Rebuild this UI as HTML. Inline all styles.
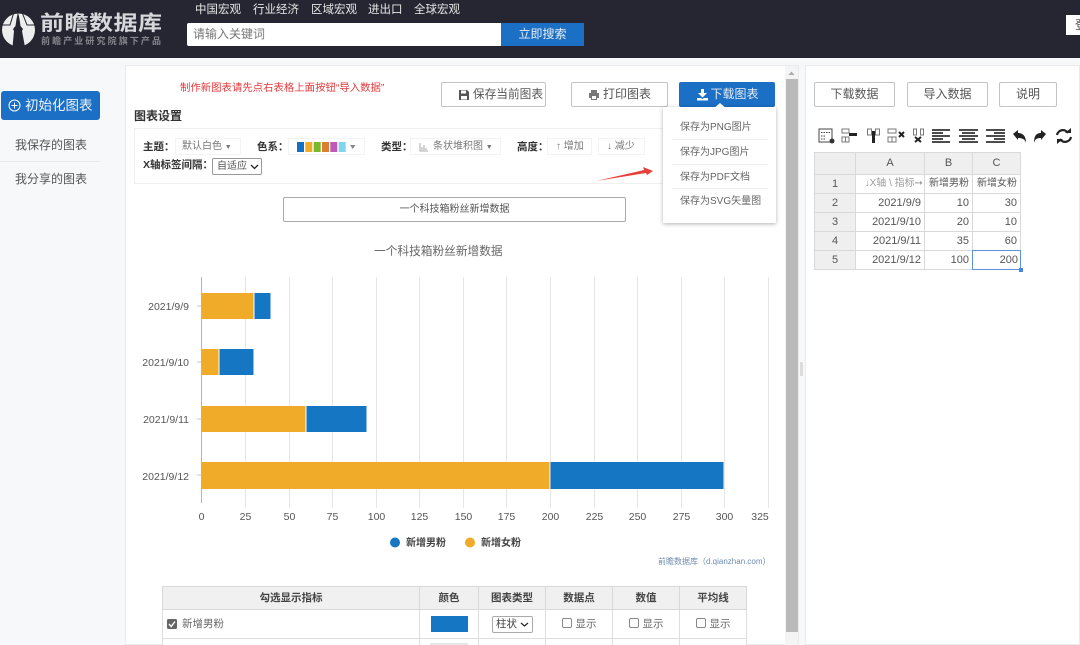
<!DOCTYPE html>
<html lang="zh"><head><meta charset="utf-8"><style>
html,body{margin:0;padding:0;width:1080px;height:645px;overflow:hidden}
body{position:relative;background:#f7f8f9;font-family:"Liberation Sans","Noto Sans CJK SC",sans-serif;color:#555;font-size:11px}
.a{position:absolute;white-space:nowrap}
.btn{position:absolute;box-sizing:border-box;background:#fff;border:1px solid #c4c4c4;border-radius:2px;text-align:center;color:#555;font-size:12px;line-height:23px;height:25px}
.chip{position:absolute;height:17px;line-height:15px;border:1px solid #f3f3f3;box-sizing:border-box;color:#777;font-size:10px;white-space:nowrap}
.b{font-weight:bold;color:#333;font-size:10.5px}
.cell{position:absolute;box-sizing:border-box;border-right:1px solid #d9d9d9;border-bottom:1px solid #d9d9d9;font-size:11px;color:#555;line-height:18px;text-align:right;padding-right:3px;white-space:nowrap;overflow:hidden;background:#fff}
.hd{background:#efefef;text-align:center;padding:0;color:#555}
.th{position:absolute;top:586px;height:24px;line-height:23px;text-align:center;box-sizing:border-box;background:#f0f0f0;border-right:1px solid #d8d8d8;border-bottom:1px solid #d8d8d8;font-weight:bold;color:#444;font-size:10.5px}
.td{position:absolute;top:610px;height:29px;box-sizing:border-box;border-right:1px solid #dedede;border-bottom:1px solid #dedede;background:#fff;font-size:10.5px;color:#666;line-height:29px;text-align:center}
.td2{top:639px;height:6px;border-bottom:none}
.cb{display:inline-block;width:8px;height:8px;border:1px solid #888;border-radius:2px;vertical-align:-1px;margin-right:4px;background:#fff}
.mi{position:absolute;left:680px;color:#666;font-size:10px;white-space:nowrap}
.ln{position:absolute;left:672px;width:96px;height:1px;background:#f0f0f0}
</style></head><body>
<div class="a" style="left:0;top:0;width:1080px;height:58px;background:#252632"></div>
<svg class="a" style="left:0;top:12px" width="36" height="36" viewBox="0 0 36 36"><circle cx="18.500" cy="18" r="16.500" fill="#eee"/><path d="M12.500 35L14 19 13 17 15.500 14 16.500 7 18 0 19.500 7 20.500 14 23 17 22 19 25 35z" fill="#252632"/><path d="M13.500 1.500L10 13H2M22.500 1.500L27 13H35" stroke="#252632" stroke-width="1" fill="none"/></svg>
<div class="a" style="left:40px;top:11px;font-size:24px;line-height:26px;font-weight:bold;color:#d8d8dc;letter-spacing:.5px;transform:scaleY(.85);transform-origin:50% 50%">前瞻数据库</div>
<div class="a" style="left:41px;top:36px;font-size:9px;line-height:11px;font-weight:bold;color:#85868e;letter-spacing:2.100px">前瞻产业研究院旗下产品</div>
<div class="a" style="left:195px;top:2px;font-size:11.500px;line-height:17px;color:#e6e6e6">中国宏观</div>
<div class="a" style="left:253px;top:2px;font-size:11.500px;line-height:17px;color:#e6e6e6">行业经济</div>
<div class="a" style="left:311px;top:2px;font-size:11.500px;line-height:17px;color:#e6e6e6">区域宏观</div>
<div class="a" style="left:368px;top:2px;font-size:11.500px;line-height:17px;color:#e6e6e6">进出口</div>
<div class="a" style="left:414px;top:2px;font-size:11.500px;line-height:17px;color:#e6e6e6">全球宏观</div>
<div class="a" style="left:187px;top:23px;width:314px;height:23px;background:#fff;border-radius:2px 0 0 2px;line-height:23px;text-indent:6px;font-size:12px;color:#777">请输入关键词</div>
<div class="a" style="left:501px;top:23px;width:83px;height:23px;background:#1b6fc4;color:#e8eef6;font-size:12px;line-height:23px;text-align:center">立即搜索</div>
<div class="a" style="left:1066px;top:15px;width:14px;height:20px;background:#fff;color:#555;font-size:12px;line-height:20px;text-indent:9px;overflow:hidden">登</div>

<div class="a" style="left:1px;top:91px;width:99px;height:29px;background:#1b6fc4;border-radius:3px;color:#eef3f9;font-size:13.500px;line-height:29px;text-indent:24px">初始化图表</div>
<svg class="a" style="left:8px;top:99px" width="13" height="13" viewBox="0 0 13 13"><circle cx="6.500" cy="6.500" r="5.500" fill="none" stroke="#fff"/><path d="M6.500 3.500v6M3.500 6.500h6" stroke="#fff"/></svg>
<div class="a" style="left:15px;top:137px;font-size:12px;line-height:17px;color:#555">我保存的图表</div>
<div class="a" style="left:0;top:161px;width:100px;height:1px;background:#eaeaea"></div>
<div class="a" style="left:15px;top:171px;font-size:12px;line-height:17px;color:#555">我分享的图表</div>

<div class="a" style="left:125px;top:65px;width:674px;height:580px;background:#fff;border:1px solid #e9eaec;box-sizing:border-box"></div>
<div class="a" style="left:805px;top:65px;width:275px;height:580px;background:#fff;border:1px solid #e9eaec;box-sizing:border-box"></div>
<div class="a" style="left:785px;top:66px;width:13px;height:579px;background:#f4f4f4"></div>
<div class="a" style="left:786px;top:79px;width:12px;height:553px;background:#b9b9b9"></div>
<svg class="a" style="left:787px;top:70px" width="9" height="6"><path d="M1.500 5L4.500 1.500 7.500 5z" fill="#aaa"/></svg>
<div class="a" style="left:800px;top:362px;width:3px;height:14px;background:#dcdcdc"></div>

<div class="a" style="left:180px;top:82px;font-size:10.400px;line-height:14px;color:#e4393c">制作新图表请先点右表格上面按钮“导入数据”</div>
<div class="btn" style="left:441px;top:82px;width:105px;text-indent:29px;font-size:11.700px">保存当前图表</div>
<svg class="a" style="left:458px;top:89px" width="12" height="12" viewBox="0 0 12 12"><path d="M1 1h8l2 2v8H1z" fill="#555"/><rect x="3" y="1.500" width="5" height="3" fill="#fff"/><rect x="3" y="7" width="6" height="3.500" fill="#fff"/></svg>
<div class="btn" style="left:571px;top:82px;width:97px;text-indent:15px">打印图表</div>
<svg class="a" style="left:588px;top:89px" width="12" height="12" viewBox="0 0 12 12"><path d="M3 1h6v3H3zM1 4h10v5H9v2H3V9H1z" fill="#777"/><rect x="4" y="7" width="4" height="3" fill="#fff"/></svg>
<div class="a" style="left:679px;top:82px;width:96px;height:25px;background:#1b6fc4;border-radius:2px;color:#e8eef6;font-size:12px;line-height:25px;text-align:center;text-indent:15px">下载图表</div>
<svg class="a" style="left:696px;top:88px" width="13" height="13" viewBox="0 0 13 13"><path d="M5 1h3v4h3L6.500 9.500 2 5h3zM1 10h4l1.500 1L8 10h4v2.500H1z" fill="#fff"/></svg>

<div class="a b" style="left:134px;top:108px;font-size:12px;line-height:17px">图表设置</div>
<div class="a" style="left:134px;top:128px;width:640px;height:56px;border:1px solid #f0f0f0;box-sizing:border-box"></div>
<div class="a b" style="left:143px;top:140px;line-height:15px">主题：</div>
<div class="chip" style="left:175px;top:138px;width:66px;padding-left:6px">默认白色 <span style="font-size:7px">▼</span></div>
<div class="a b" style="left:257px;top:140px;line-height:15px">色系：</div>
<div class="chip" style="left:288px;top:138px;width:77px"></div>
<svg class="a" style="left:297px;top:142px" width="62" height="10"><rect width="7" height="10" fill="#1470c0"/><rect x="8.300" width="7" height="10" fill="#f0ab28"/><rect x="16.700" width="7" height="10" fill="#7cb82f"/><rect x="25" width="7" height="10" fill="#d9812f"/><rect x="33.300" width="7" height="10" fill="#c05ab8"/><rect x="41.700" width="7" height="10" fill="#7fd6ec"/><path d="M53 3h5.500l-2.750 4z" fill="#888"/></svg>
<div class="a b" style="left:381px;top:140px;line-height:15px">类型：</div>
<div class="chip" style="left:410px;top:138px;width:91px;padding-left:22px">条状堆积图 <span style="font-size:7px">▼</span></div>
<svg class="a" style="left:419px;top:142px" width="10" height="10"><path d="M1 1v8h8M3 8V5M5 8V3M7 8V6" stroke="#aaa" fill="none"/></svg>
<div class="a b" style="left:517px;top:140px;line-height:15px">高度：</div>
<div class="chip" style="left:547px;top:138px;width:45px;padding-left:8px">↑ 增加</div>
<div class="chip" style="left:598px;top:138px;width:47px;padding-left:8px">↓ 减少</div>
<div class="a b" style="left:143px;top:158px;line-height:15px">X轴标签间隔：</div>
<div class="a" style="left:212px;top:158px;width:50px;height:17px;box-sizing:border-box;border:1px solid #999;border-radius:2px;color:#555;font-size:10px;line-height:15px;padding-left:4px">自适应</div>
<svg class="a" style="left:250px;top:164px" width="9" height="6"><path d="M1 1l3.500 3.500L8 1" stroke="#222" stroke-width="1.300" fill="none"/></svg>

<div class="a" style="left:283px;top:197px;width:343px;height:25px;box-sizing:border-box;border:1px solid #aaa;border-radius:2px;text-align:center;font-size:10px;line-height:23px;color:#555">一个科技箱粉丝新增数据</div>
<div class="a" style="left:374px;top:243px;font-size:11.700px;line-height:18px;color:#666">一个科技箱粉丝新增数据</div>

<svg class="a" style="left:130px;top:270px" width="650" height="260" font-family="Liberation Sans" font-size="10.500" fill="#555">
<g stroke="#e6e6e6"><path d="M115.500 7v231M159.500 7v231M202.500 7v231M246.500 7v231M289.500 7v231M333.500 7v231M376.500 7v231M420.500 7v231M464.500 7v231M507.500 7v231M551.500 7v231M594.500 7v231M638.500 7v231"/></g>
<path d="M71.500 7v226" stroke="#b5b5b5" fill="none"/>
<g stroke="#c4c4c4"><path d="M67 36h4M67 92h4M67 149h4M67 205h4"/></g>
<rect x="71.500" y="23" width="52" height="26" fill="#f0ab28"/><rect x="124.500" y="23" width="16" height="26" fill="#1577c4"/>
<rect x="71.500" y="79" width="17" height="26" fill="#f0ab28"/><rect x="89.500" y="79" width="34" height="26" fill="#1577c4"/>
<rect x="71.500" y="136" width="104" height="26" fill="#f0ab28"/><rect x="176.500" y="136" width="60" height="26" fill="#1577c4"/>
<rect x="71.500" y="192" width="348" height="27" fill="#f0ab28"/><rect x="420.500" y="192" width="173" height="27" fill="#1577c4"/>
<g text-anchor="end"><text x="59" y="40">2021/9/9</text><text x="59" y="96">2021/9/10</text><text x="59" y="153">2021/9/11</text><text x="59" y="210">2021/9/12</text></g>
<g text-anchor="middle"><text x="71.500" y="250">0</text><text x="115.500" y="250">25</text><text x="159.500" y="250">50</text><text x="202.500" y="250">75</text><text x="246.500" y="250">100</text><text x="289.500" y="250">125</text><text x="333.500" y="250">150</text><text x="376.500" y="250">175</text><text x="420.500" y="250">200</text><text x="464.500" y="250">225</text><text x="507.500" y="250">250</text><text x="551.500" y="250">275</text><text x="594.500" y="250">300</text><text x="630" y="250">325</text></g>
</svg>
<svg class="a" style="left:390px;top:537px" width="90" height="12"><circle cx="5" cy="5.500" r="5" fill="#1577c4"/><circle cx="80" cy="5.500" r="5" fill="#f0ab28"/></svg>
<div class="a b" style="left:406px;top:536px;line-height:15px;color:#444;font-size:10px">新增男粉</div>
<div class="a b" style="left:481px;top:536px;line-height:15px;color:#444;font-size:10px">新增女粉</div>
<div class="a" style="left:658px;top:556px;font-size:8px;line-height:12px;color:#6d8cb0">前瞻数据库（d.qianzhan.com）</div>

<div class="th" style="left:162px;width:258px;border-left:1px solid #d8d8d8;border-top:1px solid #d8d8d8">勾选显示指标</div>
<div class="th" style="left:420px;width:59px;border-top:1px solid #d8d8d8">颜色</div>
<div class="th" style="left:479px;width:67px;border-top:1px solid #d8d8d8">图表类型</div>
<div class="th" style="left:546px;width:67px;border-top:1px solid #d8d8d8">数据点</div>
<div class="th" style="left:613px;width:67px;border-top:1px solid #d8d8d8">数值</div>
<div class="th" style="left:680px;width:67px;border-top:1px solid #d8d8d8">平均线</div>
<div class="td" style="left:162px;width:258px;border-left:1px solid #dedede;text-align:left;padding-left:19px">新增男粉</div>
<svg class="a" style="left:167px;top:619px" width="10" height="10"><rect width="10" height="10" rx="1.500" fill="#666"/><path d="M2 5l2.200 2.500L8 2.500" stroke="#fff" stroke-width="1.400" fill="none"/></svg>
<div class="td" style="left:420px;width:59px"></div>
<div class="a" style="left:431px;top:616px;width:37px;height:16px;background:#1577c4"></div>
<div class="td" style="left:479px;width:67px"></div>
<div class="a" style="left:492px;top:616px;width:41px;height:17px;box-sizing:border-box;border:1px solid #aaa;border-radius:2px;font-size:10.500px;line-height:15px;color:#444;padding-left:3px">柱状</div>
<svg class="a" style="left:520px;top:622px" width="9" height="6"><path d="M1 1l3.500 3L8 1" stroke="#222" stroke-width="1.200" fill="none"/></svg>
<div class="td" style="left:546px;width:67px"><span class="cb"></span>显示</div>
<div class="td" style="left:613px;width:67px"><span class="cb"></span>显示</div>
<div class="td" style="left:680px;width:67px"><span class="cb"></span>显示</div>
<div class="td td2" style="left:162px;width:258px;border-left:1px solid #dedede"></div>
<div class="td td2" style="left:420px;width:59px"></div>
<div class="td td2" style="left:479px;width:67px"></div>
<div class="td td2" style="left:546px;width:67px"></div>
<div class="td td2" style="left:613px;width:67px"></div>
<div class="td td2" style="left:680px;width:67px"></div>
<div class="a" style="left:430px;top:643px;width:38px;height:2px;border:1px solid #e6e6e6;box-sizing:border-box"></div>

<div class="a" style="left:663px;top:107px;width:113px;height:116px;background:#fff;box-shadow:0 1px 4px rgba(0,0,0,.3)"></div>
<svg class="a" style="left:713px;top:102px" width="14" height="7"><path d="M0 7l7-6 7 6z" fill="#fff"/></svg>
<div class="mi" style="top:120px;line-height:15px">保存为PNG图片</div><div class="ln" style="top:139px"></div>
<div class="mi" style="top:145px;line-height:15px">保存为JPG图片</div><div class="ln" style="top:164px"></div>
<div class="mi" style="top:170px;line-height:15px">保存为PDF文档</div><div class="ln" style="top:188px"></div>
<div class="mi" style="top:194px;line-height:15px">保存为SVG矢量图</div>
<svg class="a" style="left:594px;top:165px" width="60" height="20"><path d="M2 16L50 5 49 2 59 6 53 10 52 8z" fill="#e5403a"/></svg>

<div class="btn" style="left:814px;top:82px;width:81px">下载数据</div>
<div class="btn" style="left:907px;top:82px;width:81px">导入数据</div>
<div class="btn" style="left:999px;top:82px;width:58px">说明</div>

<svg class="a" style="left:816px;top:126px" width="260" height="20" fill="none" stroke="#444">
<rect x="3" y="3" width="13" height="13"/><path d="M5 6.500h9M5 10h4M5 13h4" stroke-dasharray="1.500 1"/><circle cx="16" cy="15" r="2.500" fill="#333" stroke="none"/>
<path d="M26 3h7v4h-7zM26 11h7v5h-7zM29.500 11v5" stroke="#777"/><rect x="33" y="7" width="8" height="3" fill="#222" stroke="none"/>
<path d="M51.500 3h4v6h-4zM59.500 3h4v6h-4z" stroke="#777"/><rect x="56" y="5" width="3" height="12" fill="#222" stroke="none"/>
<path d="M72 3h8v4h-8zM72 11h8v5h-8zM76 11v5" stroke="#777"/><path d="M83 6l5 5M88 6l-5 5" stroke="#222" stroke-width="2"/>
<path d="M97.500 3h3v6h-3zM104.500 3h3v6h-3z" stroke="#777"/><path d="M99 11l6 5M105 11l-6 5" stroke="#222" stroke-width="2"/>
<g stroke="#333" stroke-width="1.800"><path d="M116 4h18M116 7h11M116 10h18M116 13h11M116 16h18"/><path d="M143 4h19M146 7h13M143 10h19M146 13h13M143 16h19"/><path d="M170 4h19M178 7h11M170 10h19M178 13h11M170 16h19"/></g>
<path d="M197 8l5-4v3c5 0 8 3 8 10-1-4-4-5-8-5v2z" fill="#222" stroke="none"/>
<path d="M230 8l-5-4v3c-5 0-7 3-7 10 1-4 3-5 7-5v2z" fill="#222" stroke="none"/>
<path d="M241 9a6 6 0 0 1 11-2M255 11a6 6 0 0 1-11 2" stroke="#222" stroke-width="2.200"/><path d="M249 7h6V2zM247 13h-6v5z" fill="#222" stroke="none"/>
</svg>

<div class="cell hd" style="left:814px;top:152px;width:42px;height:23px;background:#eee;border-left:1px solid #d9d9d9;border-top:1px solid #d9d9d9"></div>
<div class="cell hd" style="left:856px;top:152px;width:69px;height:23px;border-top:1px solid #d9d9d9;line-height:21px">A</div>
<div class="cell hd" style="left:925px;top:152px;width:48px;height:23px;border-top:1px solid #d9d9d9;line-height:21px">B</div>
<div class="cell hd" style="left:973px;top:152px;width:48px;height:23px;border-top:1px solid #d9d9d9;line-height:21px">C</div>
<div class="cell hd" style="left:814px;top:175px;width:42px;height:19px;border-left:1px solid #d9d9d9">1</div>
<div class="cell" style="left:856px;top:175px;width:69px;height:19px;color:#999;padding-right:1px;font-size:10px">↓X轴 \ 指标➙</div>
<div class="cell" style="left:925px;top:175px;width:48px;height:19px;font-size:10px;padding-right:3px">新增男粉</div>
<div class="cell" style="left:973px;top:175px;width:48px;height:19px;font-size:10px;padding-right:3px">新增女粉</div>
<div class="cell hd" style="left:814px;top:194px;width:42px;height:19px;border-left:1px solid #d9d9d9">2</div>
<div class="cell" style="left:856px;top:194px;width:69px;height:19px">2021/9/9</div>
<div class="cell" style="left:925px;top:194px;width:48px;height:19px">10</div>
<div class="cell" style="left:973px;top:194px;width:48px;height:19px">30</div>
<div class="cell hd" style="left:814px;top:213px;width:42px;height:19px;border-left:1px solid #d9d9d9">3</div>
<div class="cell" style="left:856px;top:213px;width:69px;height:19px">2021/9/10</div>
<div class="cell" style="left:925px;top:213px;width:48px;height:19px">20</div>
<div class="cell" style="left:973px;top:213px;width:48px;height:19px">10</div>
<div class="cell hd" style="left:814px;top:232px;width:42px;height:19px;border-left:1px solid #d9d9d9">4</div>
<div class="cell" style="left:856px;top:232px;width:69px;height:19px">2021/9/11</div>
<div class="cell" style="left:925px;top:232px;width:48px;height:19px">35</div>
<div class="cell" style="left:973px;top:232px;width:48px;height:19px">60</div>
<div class="cell hd" style="left:814px;top:251px;width:42px;height:19px;border-left:1px solid #d9d9d9">5</div>
<div class="cell" style="left:856px;top:251px;width:69px;height:19px">2021/9/12</div>
<div class="cell" style="left:925px;top:251px;width:48px;height:19px">100</div>
<div class="cell" style="left:972px;top:250px;width:49px;height:20px;border:1.500px solid #5a93dc;line-height:18px;padding-right:2px">200</div>
<div class="a" style="left:1019px;top:268px;width:4px;height:4px;background:#4a86d8"></div>
</body></html>
